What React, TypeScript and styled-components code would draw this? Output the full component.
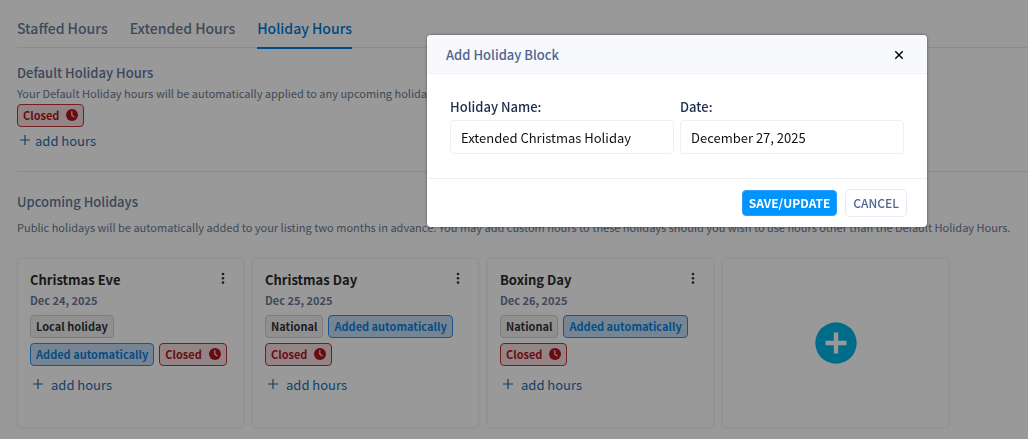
import React from "react";
import styled, { createGlobalStyle } from "styled-components";

const GlobalStyle = createGlobalStyle`
  *, *::before, *::after { box-sizing: border-box; }
  body {
    margin: 0;
    background: #fff;
    color: #506690;
    font-family: "Noto Sans CJK SC", "Noto Sans", sans-serif;
    font-size: 13px;
    line-height: 20px;
  }
  button, input { font: inherit; }
  h2, h3, p { margin: 0; }
`;

const Page = styled.main`
  padding: 16px 0 11px 17px;
`;

const Tabs = styled.nav`
  display: flex;
  gap: 22px;
  border-bottom: 1px solid #e3ebf6;
`;

const Tab = styled.a<{ $active?: boolean }>`
  margin-bottom: -2px;
  padding-bottom: 7px;
  border-bottom: 2px solid ${(p) => (p.$active ? "#0082e6" : "transparent")};
  color: ${(p) => (p.$active ? "#0078d8" : "#6a7a96")};
  font-size: 14px;
  font-weight: 500;
  line-height: 24px;
  text-decoration: none;
`;

const Section = styled.section<{ $divided?: boolean }>`
  padding-top: ${(p) => (p.$divided ? "20px" : "15px")};
  border-top: ${(p) => (p.$divided ? "1px solid #e6e8eb" : "0")};
  margin-top: ${(p) => (p.$divided ? "20px" : "0")};
`;

const Heading = styled.h2`
  color: #63779a;
  font-size: 13px;
  font-weight: 500;
  line-height: 20px;
`;

const Note = styled.p<{ $spaced?: boolean }>`
  padding: ${(p) => (p.$spaced ? "5px 0 21px" : "0")};
  color: #6a7a96;
  font-size: 11px;
  line-height: 20px;
`;

const badgeTones = {
  neutral: "border-color: #d0d0d0; background: #f0f0f0; color: #333;",
  info: "border-color: #2b8fe8; background: #c6def5; color: #0a80dc;",
  danger: "border-color: #c0323a; background: #f6dcde; color: #b0141e;",
};

const Badge = styled.span<{ $tone: keyof typeof badgeTones }>`
  display: inline-flex;
  align-items: center;
  gap: 7px;
  height: 23px;
  padding: 0 5px 1px;
  border: 1px solid;
  border-radius: 4px;
  font-size: 11px;
  font-weight: 700;
  line-height: 20px;
  white-space: nowrap;
  ${(p) => badgeTones[p.$tone]}
`;

const AddHoursButton = styled.button<{ $wide?: boolean }>`
  display: flex;
  align-items: center;
  gap: ${(p) => (p.$wide ? "8px" : "5px")};
  margin-top: ${(p) => (p.$wide ? "9px" : "4px")};
  padding: 0 3px;
  border: 0;
  background: none;
  color: #1f6dab;
  font-size: 13px;
  line-height: 20px;

  svg { margin-bottom: 3px; }
`;

const Cards = styled.div`
  display: grid;
  grid-template-columns: repeat(auto-fill, 227px);
  gap: 8px;
`;

const Card = styled.article<{ $centered?: boolean }>`
  display: flex;
  flex-direction: column;
  align-items: ${(p) => (p.$centered ? "center" : "stretch")};
  justify-content: ${(p) => (p.$centered ? "center" : "flex-start")};
  min-height: 170px;
  padding: 11px 12px;
  border: 1px solid #f4f4f4;
  border-radius: 4px;
  box-shadow: 0 0 3px rgba(0, 0, 0, 0.08);
`;

const CardHeader = styled.header`
  display: flex;
  align-items: flex-start;
  justify-content: space-between;
`;

const CardTitle = styled.h3`
  color: #2b2b2b;
  font-size: 13px;
  font-weight: 700;
  line-height: 20px;
`;

const MenuButton = styled.button`
  display: flex;
  padding: 0 6px;
  border: 0;
  background: none;
  color: #333;
`;

const CardDate = styled.time`
  color: #6a7a96;
  font-size: 11px;
  font-weight: 700;
  line-height: 20px;
`;

const Badges = styled.div<{ $compact?: boolean }>`
  display: flex;
  flex-wrap: wrap;
  gap: 5px;
  margin-top: ${(p) => (p.$compact ? "1px" : "5px")};
`;

const AddBlockButton = styled.button`
  display: flex;
  padding: 0;
  border: 0;
  border-radius: 50%;
  background: none;
`;

const Overlay = styled.div`
  position: fixed;
  inset: 0;
  display: flex;
  align-items: flex-start;
  justify-content: flex-end;
  padding: 35px 101px 0 16px;
  background: rgba(0, 0, 0, 0.4);
`;

const Dialog = styled.form`
  flex: 0 1 500px;
  border-radius: 4px;
  background: #fff;
  box-shadow: 0 0 3px rgba(0, 0, 0, 0.5);
  overflow: hidden;
`;

const DialogHeader = styled.header`
  display: flex;
  align-items: center;
  justify-content: space-between;
  padding: 10px 20px 8px 19px;
  border-bottom: 1px solid #edf2f7;
  background: #f7f9fc;
`;

const DialogTitle = styled.h2`
  color: #506690;
  font-size: 13px;
  font-weight: 500;
  line-height: 20px;
`;

const CloseButton = styled.button`
  display: flex;
  padding: 3px;
  border: 0;
  background: none;
  color: #000;
`;

const Fields = styled.div`
  display: grid;
  grid-template-columns: 1fr 1fr;
  gap: 6px;
  padding: 23px 23px 24px;
`;

const Field = styled.label`
  display: flex;
  flex-direction: column;
  gap: 3px;
  color: #1b2e4b;
  font-size: 13px;
  font-weight: 500;
  line-height: 20px;
`;

const TextInput = styled.input`
  width: 100%;
  height: 34px;
  padding: 0 10px;
  border: 1px solid #edeff2;
  border-radius: 4px;
  background: #fff;
  color: #111;
  font-size: 13px;
  font-weight: 400;
`;

const DialogFooter = styled.footer`
  display: flex;
  align-items: center;
  justify-content: flex-end;
  gap: 8px;
  padding: 10px 20px;
  border-top: 1px solid #edf0f3;
`;

const ActionButton = styled.button<{ $primary?: boolean }>`
  height: ${(p) => (p.$primary ? "26px" : "28px")};
  padding: 0 ${(p) => (p.$primary ? "6px" : "7px")};
  border: 1px solid ${(p) => (p.$primary ? "#2f9dff" : "#e3ebf6")};
  border-radius: 4px;
  background: ${(p) => (p.$primary ? "#0094ff" : "#fff")};
  color: ${(p) => (p.$primary ? "#fff" : "#506690")};
  font-size: 12px;
  font-weight: ${(p) => (p.$primary ? 700 : 500)};
  line-height: 20px;
`;

const ClockIcon = () => (
  <svg width="12" height="12" viewBox="0 0 12 12" aria-hidden="true">
    <circle cx="6" cy="6" r="6" fill="currentColor" />
    <path d="M5.8 2.6V6.2L8 7.8" fill="none" stroke="#f6dcde" strokeWidth="1.2" strokeLinecap="round" />
  </svg>
);

const PlusIcon = () => (
  <svg width="10" height="10" viewBox="0 0 10 10" aria-hidden="true">
    <path d="M5 0V10M0 5H10" stroke="currentColor" strokeWidth="1.2" />
  </svg>
);

const DotsIcon = () => (
  <svg width="4" height="16" viewBox="0 0 4 16" fill="currentColor" aria-hidden="true">
    <circle cx="2" cy="4" r="1.3" />
    <circle cx="2" cy="8.3" r="1.3" />
    <circle cx="2" cy="12.6" r="1.3" />
  </svg>
);

const CloseIcon = () => (
  <svg width="10" height="10" viewBox="0 0 10 10" aria-hidden="true">
    <path d="M1.3 1.3L8.7 8.7M8.7 1.3L1.3 8.7" stroke="currentColor" strokeWidth="1.4" />
  </svg>
);

const AddCircleIcon = () => (
  <svg width="42" height="42" viewBox="0 0 42 42" aria-hidden="true">
    <circle cx="21" cy="21" r="20.7" fill="#00b4e6" />
    <path d="M21 10.5V31.5M10.5 21H31.5" stroke="#fff" strokeWidth="4.4" />
  </svg>
);

const ClosedBadge = () => (
  <Badge $tone="danger">
    Closed <ClockIcon />
  </Badge>
);

const holidays = [
  { name: "Christmas Eve", date: "Dec 24, 2025", iso: "2025-12-24", scope: "Local holiday" },
  { name: "Christmas Day", date: "Dec 25, 2025", iso: "2025-12-25", scope: "National" },
  { name: "Boxing Day", date: "Dec 26, 2025", iso: "2025-12-26", scope: "National" },
];

export default function App() {
  return (
    <>
      <GlobalStyle />
      <Page>
        <Tabs>
          <Tab href="#staffed">Staffed Hours</Tab>
          <Tab href="#extended">Extended Hours</Tab>
          <Tab href="#holiday" $active aria-current="page">Holiday Hours</Tab>
        </Tabs>

        <Section>
          <Heading>Default Holiday Hours</Heading>
          <Note>Your Default Holiday hours will be automatically applied to any upcoming holidays</Note>
          <Badges $compact>
            <ClosedBadge />
          </Badges>
          <AddHoursButton type="button"><PlusIcon />add hours</AddHoursButton>
        </Section>

        <Section $divided>
          <Heading>Upcoming Holidays</Heading>
          <Note $spaced>
            Public holidays will be automatically added to your listing two months in advance. You may add custom
            hours to these holidays should you wish to use hours other than the Default Holiday Hours.
          </Note>
          <Cards>
            {holidays.map((h) => (
              <Card key={h.iso}>
                <CardHeader>
                  <CardTitle>{h.name}</CardTitle>
                  <MenuButton type="button" aria-label={`${h.name} options`}><DotsIcon /></MenuButton>
                </CardHeader>
                <CardDate dateTime={h.iso}>{h.date}</CardDate>
                <Badges>
                  <Badge $tone="neutral">{h.scope}</Badge>
                  <Badge $tone="info">Added automatically</Badge>
                  <ClosedBadge />
                </Badges>
                <AddHoursButton type="button" $wide><PlusIcon />add hours</AddHoursButton>
              </Card>
            ))}
            <Card $centered>
              <AddBlockButton type="button" aria-label="Add holiday block"><AddCircleIcon /></AddBlockButton>
            </Card>
          </Cards>
        </Section>
      </Page>

      <Overlay>
        <Dialog role="dialog" aria-modal="true" aria-labelledby="dialog-title">
          <DialogHeader>
            <DialogTitle id="dialog-title">Add Holiday Block</DialogTitle>
            <CloseButton type="button" aria-label="Close"><CloseIcon /></CloseButton>
          </DialogHeader>
          <Fields>
            <Field>
              Holiday Name:
              <TextInput type="text" defaultValue="Extended Christmas Holiday" />
            </Field>
            <Field>
              Date:
              <TextInput type="text" defaultValue="December 27, 2025" />
            </Field>
          </Fields>
          <DialogFooter>
            <ActionButton type="submit" $primary>SAVE/UPDATE</ActionButton>
            <ActionButton type="button">CANCEL</ActionButton>
          </DialogFooter>
        </Dialog>
      </Overlay>
    </>
  );
}
